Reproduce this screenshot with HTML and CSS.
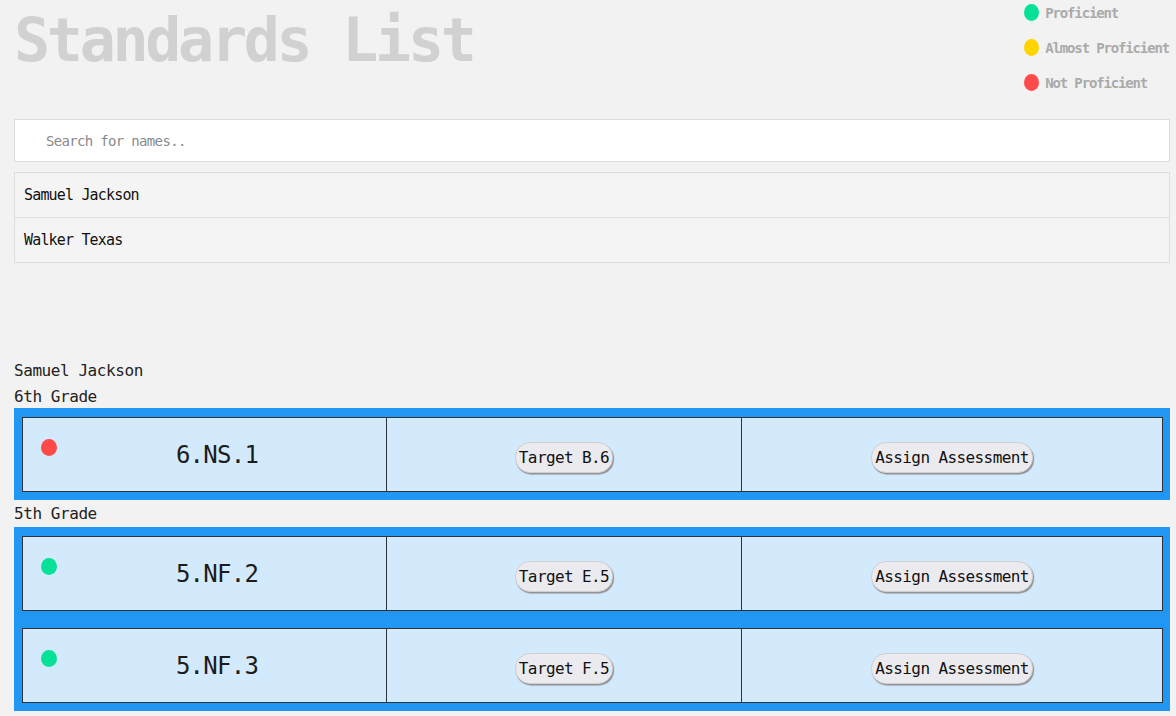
FILE: index.html
```html
<!DOCTYPE html>
<html>
<head>
<meta charset="utf-8">
<link rel="stylesheet" href="styles.css">
</head>
<body>
<div class="page">
  <header class="header">
    <h1 class="title">Standards List</h1>
    <ul class="legend">
      <li class="legend-item"><span class="dot dot-green"></span>Proficient</li>
      <li class="legend-item"><span class="dot dot-yellow"></span>Almost Proficient</li>
      <li class="legend-item"><span class="dot dot-red"></span>Not Proficient</li>
    </ul>
  </header>
  <input class="search" type="text" placeholder="Search for names..">
  <ul class="names">
    <li class="name-item">Samuel Jackson</li>
    <li class="name-item">Walker Texas</li>
  </ul>

  <div class="student">
    <div class="student-name">Samuel Jackson</div>
    <div class="grade">6th Grade</div>
    <div class="grade-box">
      <div class="std-row">
        <div class="cell cell-std"><span class="dot dot-red row-dot"></span><span class="std-code">6.NS.1</span></div>
        <div class="cell cell-btn"><button class="pill">Target B.6</button></div>
        <div class="cell cell-btn"><button class="pill">Assign Assessment</button></div>
      </div>
    </div>
    <div class="grade">5th Grade</div>
    <div class="grade-box">
      <div class="std-row">
        <div class="cell cell-std"><span class="dot dot-green row-dot"></span><span class="std-code">5.NF.2</span></div>
        <div class="cell cell-btn"><button class="pill">Target E.5</button></div>
        <div class="cell cell-btn"><button class="pill">Assign Assessment</button></div>
      </div>
      <div class="std-row">
        <div class="cell cell-std"><span class="dot dot-green row-dot"></span><span class="std-code">5.NF.3</span></div>
        <div class="cell cell-btn"><button class="pill">Target F.5</button></div>
        <div class="cell cell-btn"><button class="pill">Assign Assessment</button></div>
      </div>
    </div>
  </div>
</div>
</body>
</html>
```

FILE: styles.css
```css
html, body {
  margin: 0;
  padding: 0;
  background: #f2f2f2;
}
body {
  font-family: "DejaVu Sans Mono", "Liberation Mono", monospace;
  color: #1a1a1a;
  overflow: hidden;
}
.page {
  width: 1155px;
  padding-left: 14px;
}
.header {
  height: 119px;
  display: flex;
  justify-content: space-between;
  align-items: flex-start;
}
.title {
  margin: 10px 0 0 0;
  font-size: 60px;
  line-height: 60px;
  letter-spacing: -3.3px;
  font-weight: bold;
  color: #d1d1d1;
}
.legend {
  list-style: none;
  margin: 0;
  padding: 4px 0 0 0;
  display: flex;
  flex-direction: column;
  gap: 18px;
}
.legend-item {
  display: flex;
  align-items: center;
  gap: 6px;
  height: 17px;
  font-size: 14px;
  letter-spacing: -1.15px;
  font-weight: bold;
  color: #aaaaaa;
  margin-left: 10px;
}
.dot {
  display: inline-block;
  width: 15px;
  height: 17px;
  border-radius: 50%;
  flex: none;
}
.dot-green { background: #07e197; }
.dot-yellow { background: #ffd400; }
.dot-red { background: #ff4a4a; }

.search {
  display: block;
  box-sizing: border-box;
  width: 1156px;
  height: 43px;
  margin: 0;
  border: 1px solid #dcdcdc;
  background: #ffffff;
  padding: 0 0 0 31px;
  font-family: "DejaVu Sans Mono", monospace;
  font-size: 14px;
  letter-spacing: -0.67px;
  color: #333;
  outline: none;
}
.search::placeholder {
  color: #8a8a8a;
}
.names {
  box-sizing: border-box;
  list-style: none;
  margin: 10px 0 0 0;
  padding: 0;
  width: 1156px;
  border: 1px solid #dddddd;
  border-top: none;
}
.name-item {
  box-sizing: border-box;
  height: 45px;
  border-top: 1px solid #dddddd;
  background: #f4f4f4;
  padding-left: 9px;
  display: flex;
  align-items: center;
  font-size: 15px;
  letter-spacing: -0.83px;
  color: #111;
}
.student {
  margin-top: 95px;
  width: 1156px;
}
.student-name, .grade {
  font-size: 16px;
  line-height: 26px;
  letter-spacing: -0.43px;
  color: #222;
}
.student-name + .grade {
  margin-bottom: -2px;
}
.grade-box {
  background: #2196f3;
  padding: 9px 7px 8px 8px;
  display: flex;
  flex-direction: column;
  gap: 17px;
}
.grade-box + .grade {
  margin-top: 1px;
}
.std-row {
  display: grid;
  grid-template-columns: 363px 355px 1fr;
  height: 75px;
  box-sizing: border-box;
  border: 1px solid #2f3338;
  background: #d3e9fc;
}
.cell {
  box-sizing: border-box;
  display: flex;
  align-items: center;
}
.cell + .cell {
  border-left: 1px solid #2f3338;
}
.cell-std {
  padding-left: 18px;
  padding-right: 9px;
}
.row-dot {
  width: 16px;
  height: 17px;
  align-self: flex-start;
  margin-top: 21px;
}
.std-code {
  flex: 1;
  text-align: center;
  font-size: 24px;
  letter-spacing: -0.75px;
  color: #1c1c1c;
}
.cell-btn {
  justify-content: center;
  padding-top: 6px;
}
.pill {
  font-family: "DejaVu Sans Mono", monospace;
  font-size: 16px;
  letter-spacing: -0.6px;
  line-height: 19px;
  color: #111;
  background: #ebebef;
  border: 1px solid #cfcfd4;
  border-radius: 15px;
  padding: 5px 3px 5px 3px;
  box-shadow: 1px 1.5px 1px #8f8f8f;
}
```
